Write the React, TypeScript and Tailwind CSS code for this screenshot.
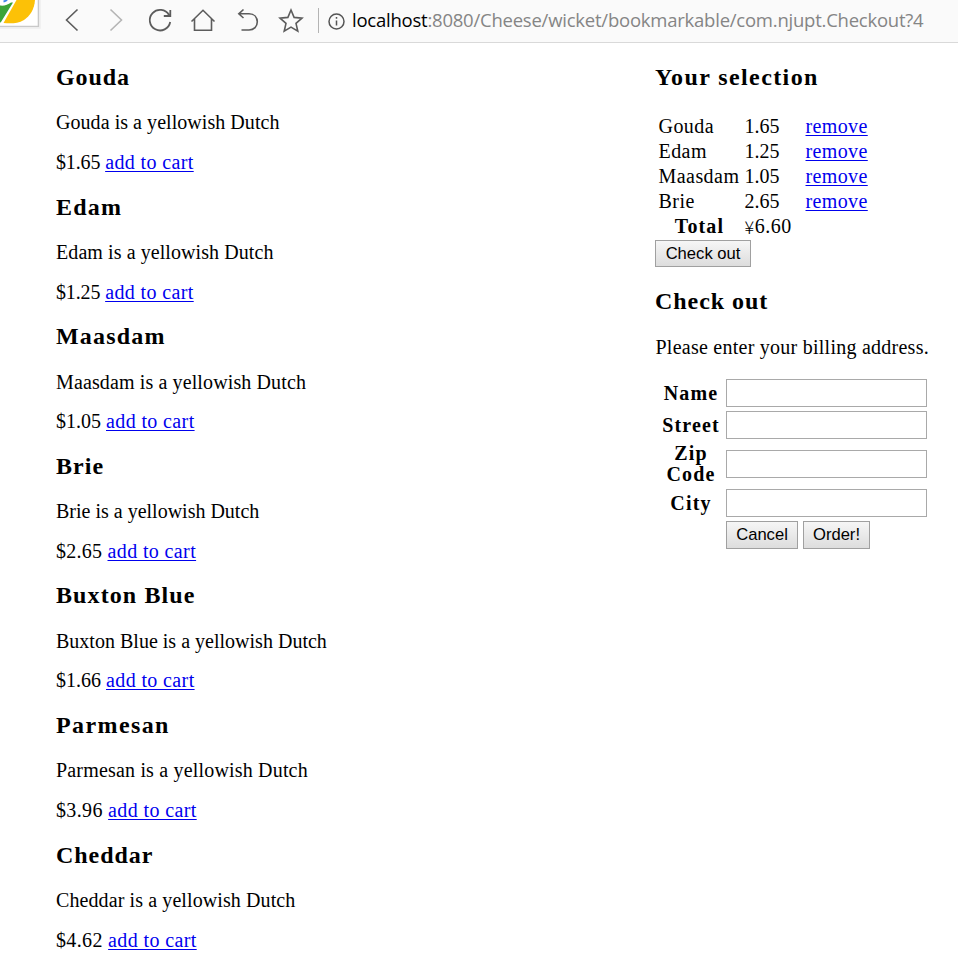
const cheeses = [
  { name: "Gouda", price: "$1.65", nameTracking: "tracking-[0.9px]", textTracking: "tracking-[0.05px]", priceTracking: "tracking-[-0.15px]" },
  { name: "Edam", price: "$1.25", nameTracking: "tracking-[1.2px]", textTracking: "tracking-[0.08px]", priceTracking: "tracking-[-0.15px]" },
  { name: "Maasdam", price: "$1.05", nameTracking: "tracking-[1.2px]", textTracking: "tracking-[0.12px]", priceTracking: "tracking-normal" },
  { name: "Brie", price: "$2.65", nameTracking: "tracking-[1.05px]", textTracking: "tracking-normal", priceTracking: "tracking-[0.25px]" },
  { name: "Buxton Blue", price: "$1.66", nameTracking: "tracking-[1.1px]", textTracking: "tracking-[0.01px]", priceTracking: "tracking-normal" },
  { name: "Parmesan", price: "$3.96", nameTracking: "tracking-[1.4px]", textTracking: "tracking-[0.18px]", priceTracking: "tracking-[0.35px]" },
  { name: "Cheddar", price: "$4.62", nameTracking: "tracking-[0.95px]", textTracking: "tracking-[0.1px]", priceTracking: "tracking-[0.35px]" },
];

const cart = [
  { name: "Gouda", price: "1.65" },
  { name: "Edam", price: "1.25" },
  { name: "Maasdam", price: "1.05" },
  { name: "Brie", price: "2.65" },
];

const buttonClass =
  "block border border-[#a0a0a0] bg-linear-to-b from-[#f6f6f6] to-[#dddddd] text-center font-['Liberation_Sans',Arial,sans-serif] text-[16.6px] text-black whitespace-nowrap";

function Toolbar() {
  return (
    <header className="flex h-[43px] w-full overflow-hidden border-b border-[#d9d9d9] bg-[#fafafa]">
      <svg className="h-[42px] w-[330px] shrink-0" viewBox="0 0 330 42" fill="none">
        <path d="M0 0H38.5V26.5H0Z" fill="#fff" />
        <path d="M38.5 0V26.5H0" stroke="#c9c9c9" strokeWidth="1.6" />
        <path d="M40 0V28H0" stroke="#eeeeee" strokeWidth="1.5" />
        <path d="M0 5.500C4 6 8 5 11 2.500H13L1 22L0 22.8Z" fill="#3ba43a" />
        <path d="M16.500 0H35C34.500 9 30 16 24 20C17 24 10 23.500 3.500 23Z" fill="#fcc107" />
        <path d="M3.500 1.500C5 1.200 6.500 .5 7 -.5" stroke="#3f86ee" strokeWidth="2" />
        <g stroke="#5c5c5c" strokeWidth="1.6">
          <path d="M77.500 9.500L66.500 20L77.500 30.500" />
          <path d="M110.500 9.500L121.500 20L110.500 30.500" stroke="#b5b5b5" />
          <path d="M169 15A10.300 10.300 0 1 0 170.200 22M170.300 10V16H163.800" strokeWidth="1.8" />
          <path d="M191.500 21.500L203 10.300L214.500 21.500M194.500 19V30.200H211.500V19" />
          <path d="M243.500 9.500L238.800 13.800L243.500 18M239 13.800H249C254.500 13.800 257.300 17.500 257.300 21.800C257.300 26.500 254 30 249 30H241.500" />
          <path d="M291 10L294.100 17.400L302 18.100L296 23.400L297.800 31.200L291 27.100L284.200 31.200L286 23.400L280 18.100L287.900 17.400Z" />
        </g>
        <path d="M318.500 8V33" stroke="#b4b4b4" />
      </svg>
      <svg className="-ml-[2px] h-[42px] w-[24px] shrink-0" viewBox="328 0 24 42" fill="none">
        <circle cx="336.500" cy="21.500" r="7.500" stroke="#555" strokeWidth="1.5" />
        <path d="M336.500 20.500V25.500M336.500 17V18.700" stroke="#555" strokeWidth="1.5" />
      </svg>
      <div className="h-[42px] font-['Open_Sans','Noto_Sans',sans-serif] text-[18.5px] leading-[40px] tracking-[-0.23px] whitespace-nowrap text-[#858585]">
        <span className="text-black">localhost</span>:8080/Cheese/wicket/bookmarkable/com.njupt.Checkout?4
      </div>
    </header>
  );
}

function Heading({ children, tracking = "tracking-[1.05px]" }: { children: string; tracking?: string }) {
  return <h2 className={`text-[24px] leading-[26px] font-bold ${tracking}`}>{children}</h2>;
}

function Link({ children }: { children: string }) {
  return (
    <a href="#" className="tracking-[0.38px] text-[#0000ee] underline decoration-1 underline-offset-2">
      {children}
    </a>
  );
}

function Field({ label, tall = false }: { label: string; tall?: boolean }) {
  return (
    <label className={tall ? "flex h-[42px] items-center" : "flex h-[28px] items-center"}>
      <span className="w-[71px] pr-[3px] pl-[4px] text-center font-bold tracking-[1.15px]">{label}</span>
      <input className="h-[28px] w-[201px] border border-[#a9a9a9] bg-white" />
    </label>
  );
}

export default function App() {
  return (
    <div className="h-[960px] w-[958px] overflow-hidden bg-white font-['Liberation_Serif',serif] text-[20px] leading-[22px] text-black">
      <Toolbar />
      <main className="flex pt-[21px] pl-[56px]">
        <section className="w-[599px] shrink-0">
          {cheeses.map((c) => (
            <article key={c.name} className="h-[129.6px]">
              <Heading tracking={c.nameTracking}>{c.name}</Heading>
              <p className={`mt-[21.4px] ${c.textTracking}`}>{c.name} is a yellowish Dutch</p>
              <p className={`mt-[17.6px] ${c.priceTracking}`}>
                {c.price} <Link>add to cart</Link>
              </p>
            </article>
          ))}
        </section>
        <aside className="w-[290px] shrink-0">
          <Heading tracking="tracking-[1.4px]">Your selection</Heading>
          <div className="mt-[24px] grid grid-cols-[86px_61px_80px] pl-[3.5px] leading-[25px]">
            {cart.map((c) => (
              <div key={c.name} className="contents">
                <span className="tracking-[0.45px]">{c.name}</span>
                <span>{c.price}</span>
                <span>
                  <Link>remove</Link>
                </span>
              </div>
            ))}
            <span className="pr-[4px] text-center font-bold tracking-[1.15px]">Total</span>
            <span className="flex h-[25px] tracking-[0.5px]">
              <span className="font-['Noto_Sans_CJK_SC',sans-serif] text-[18px] font-light">¥</span>6.60
            </span>
          </div>
          <button className={`${buttonClass} mt-[1px] h-[27px] w-[96px] leading-[25px]`}>Check out</button>
          <div className="mt-[21px]">
            <Heading tracking="tracking-[0.95px]">Check out</Heading>
          </div>
          <p className="mt-[21.5px] pl-[0.5px] tracking-[0.25px]">Please enter your billing address.</p>
          <form className="mt-[21.5px] flex flex-col gap-[4px] leading-[21px]">
            <Field label="Name" />
            <Field label="Street" />
            <Field label="Zip Code" tall />
            <Field label="City" />
            <div className="flex gap-[5px] pl-[71px]">
              <button type="button" className={`${buttonClass} h-[28px] w-[72px] pb-[1px] leading-[25px]`}>Cancel</button>
              <button type="button" className={`${buttonClass} h-[28px] w-[67px] pb-[1px] leading-[25px]`}>Order!</button>
            </div>
          </form>
        </aside>
      </main>
    </div>
  );
}
